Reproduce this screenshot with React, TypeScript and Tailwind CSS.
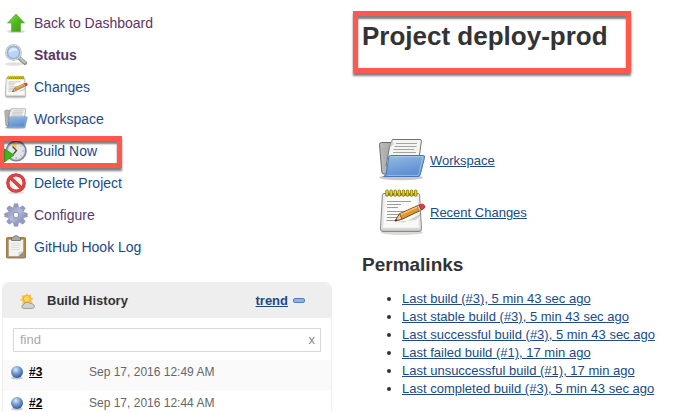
import type { ReactNode } from "react";

function UpIcon() {
  return (
    <svg viewBox="0 0 24 24" className="size-6 shrink-0" aria-hidden="true">
      <defs>
        <linearGradient id="up" x1="0" y1="0" x2="1" y2="1">
          <stop offset="0" stopColor="#8be05a" />
          <stop offset="0.5" stopColor="#4fb81c" />
          <stop offset="1" stopColor="#3a9a10" />
        </linearGradient>
      </defs>
      <ellipse cx="12" cy="20.5" rx="9" ry="1.8" fill="#000" opacity="0.15" />
      <path d="M12 3 L20.5 12 H16.5 V20.5 H7.5 V12 H3.5 Z" fill="url(#up)" stroke="#5fb33a" strokeWidth="0.8" strokeLinejoin="round" />
    </svg>
  );
}

function SearchIcon() {
  return (
    <svg viewBox="0 0 24 24" className="size-6 shrink-0" aria-hidden="true">
      <ellipse cx="10" cy="21" rx="9" ry="1.8" fill="#000" opacity="0.12" />
      <path d="M14.5 14.5 L21 20" stroke="#8f9291" strokeWidth="4.2" strokeLinecap="round" />
      <path d="M16 15.3 L20.8 19.4" stroke="#c3c5c4" strokeWidth="2" strokeLinecap="round" />
      <circle cx="9.5" cy="9.5" r="7.3" fill="#b7d3f5" stroke="#a9acab" strokeWidth="2" />
      <circle cx="9.5" cy="9.5" r="7.3" fill="none" stroke="#dcdedd" strokeWidth="1" />
      <circle cx="9.5" cy="9.5" r="5.9" fill="none" stroke="#7ea9e2" strokeWidth="0.9" />
      <path d="M4.8 9.7 Q5 5 10 4.7 Q13 5 14 7.5 Q9 8 4.8 9.7 Z" fill="#dbe9fb" />
    </svg>
  );
}

function NotepadIcon({ size }: { size: string }) {
  return (
    <svg viewBox="0 0 48 48" className={size} aria-hidden="true">
      <defs>
        <linearGradient id="pad" x1="0" y1="0" x2="0" y2="1">
          <stop offset="0" stopColor="#f0f0ee" />
          <stop offset="0.9" stopColor="#e6e6e4" />
          <stop offset="1" stopColor="#b9bab6" />
        </linearGradient>
      </defs>
      <ellipse cx="24" cy="44.5" rx="21" ry="2.5" fill="#000" opacity="0.15" />
      <path d="M6 5.5 H40 Q41.5 5.5 41.6 7 L43.5 41 Q43.5 43.5 41 43.5 H5 Q2.5 43.5 2.5 41 L4.4 7 Q4.5 5.5 6 5.5 Z" fill="url(#pad)" stroke="#888a85" />
      <path d="M7.5 8 H38.8 L40.5 39.5 H5.5 Z" fill="#fff" opacity="0.75" />
      <g stroke="#9b9c99" strokeWidth="1">
        <path d="M9 13.5 H33 M9 16.5 H23 M9 19.5 H20 M9 23.5 H34 M9 26.5 H26 M9 29.5 H22 M8.5 32.5 H17" />
      </g>
      <path d="M7.5 6.5 H39" stroke="#716a32" strokeWidth="2" />
      <g stroke="#8d7e13" strokeWidth="3.4" strokeLinecap="round">
        <path d="M9 3.3V7M13.1 3.3V7M17.2 3.3V7M21.3 3.3V7M25.4 3.3V7M29.5 3.3V7M33.6 3.3V7M37.7 3.3V7" />
      </g>
      <g stroke="#e9d331" strokeWidth="1.7" strokeLinecap="round">
        <path d="M9 3.2V6.8M13.1 3.2V6.8M17.2 3.2V6.8M21.3 3.2V6.8M25.4 3.2V6.8M29.5 3.2V6.8M33.6 3.2V6.8M37.7 3.2V6.8" />
      </g>
      <path d="M17 34 L38 32 L44 25 L26 34.5 Z" fill="#000" opacity="0.16" />
      <path d="M21.5 25.8 L40.6 17.2 L43 22.2 L24 31.2 L17 33 Z" fill="#dc9634" stroke="#7d4c0d" strokeLinejoin="round" />
      <path d="M22.5 26.6 L40 18.7" stroke="#f6c374" strokeWidth="1.5" />
      <path d="M21.5 25.8 L24 31.2 L17 33 Z" fill="#e8cfa4" stroke="#7d4c0d" strokeWidth="0.8" />
      <path d="M18.5 31 L19.5 32.3 L16.8 33.2 Z" fill="#222" />
      <path d="M38.8 18 L41.2 23 L43.5 22 L41 17 Z" fill="#c6c8c5" stroke="#777" strokeWidth="0.6" />
      <path d="M41 17 Q45.5 15 46.6 17.8 Q47.6 20.4 43.3 22 Z" fill="#ef3a35" stroke="#b51f1c" strokeWidth="0.8" />
    </svg>
  );
}

function FolderIcon({ size }: { size: string }) {
  return (
    <svg viewBox="0 0 48 48" className={size} aria-hidden="true">
      <defs>
        <linearGradient id="folder" x1="0" y1="0" x2="0.4" y2="1">
          <stop offset="0" stopColor="#98bce6" />
          <stop offset="1" stopColor="#5b8fd0" />
        </linearGradient>
        <linearGradient id="back" x1="0" y1="0" x2="1" y2="0">
          <stop offset="0" stopColor="#bdbdbb" />
          <stop offset="1" stopColor="#7c7d7a" />
        </linearGradient>
      </defs>
      <ellipse cx="23" cy="41.5" rx="22" ry="2.8" fill="#000" opacity="0.22" />
      <path d="M1.5 8.5 Q1.5 6.5 3.5 6.5 H14 L16 9 H38 V38 H6 Q4 38 3.8 36 Z" fill="url(#back)" stroke="#6d6e6b" />
      <path d="M4 13 H12 M4.4 16 H11 M4.6 19 H11 M5 22 H10" stroke="#a4a4a1" strokeWidth="0.8" />
      <path d="M14.5 3.5 H42 Q43.6 3.5 43.4 5 L40 30 H8 L11.5 11 Z" fill="#f4f4f3" stroke="#73746f" />
      <path d="M14.5 3.5 L15.5 8.5 L11.3 12.5 Z" fill="#d5d5d2" />
      <path d="M18 7.5 H39 M16.5 10.5 H38.5 M15.5 13.5 H36 M15 16.5 H38" stroke="#a4a5a2" strokeWidth="1.1" />
      <path d="M12.5 19.5 H45 Q47 19.5 46.6 21.3 L42.2 38.8 Q41.7 40.5 40 40.5 H5.5 Q7.7 39.5 8.2 37.5 L10.8 21 Q11 19.5 12.5 19.5 Z" fill="url(#folder)" stroke="#4678b8" />
      <path d="M12.3 20.7 H45 L40.8 38 Q40.4 39.4 39 39.4 H9.4" fill="none" stroke="#c5daf3" strokeWidth="0.8" opacity="0.7" />
    </svg>
  );
}

function BuildIcon() {
  return (
    <svg viewBox="0 0 24 24" className="size-6 shrink-0" aria-hidden="true">
      <circle cx="12.2" cy="12" r="9.7" fill="#e4e4e6" stroke="#80849c" strokeWidth="1.8" />
      <circle cx="12.2" cy="12" r="8.3" fill="none" stroke="#c2c6d8" strokeWidth="0.8" />
      <path d="M12.2 12 L7.5 6 L12.5 4.5 Z" fill="#f2d24a" />
      <path d="M8.5 7.5 L12.5 11.5 L9.5 15" fill="none" stroke="#4a4b4e" strokeWidth="1.3" />
      <path d="M18.4 12h1.2M12.2 18.2v1.3M16.6 7.5l.8-.8M16.6 16.4l.8.8" stroke="#8a8d99" strokeWidth="1" />
      <path d="M0.5 10 L10 16 L0.5 23 Z" fill="#43b516" stroke="#2f8a0e" strokeWidth="0.8" />
    </svg>
  );
}

function DeleteIcon() {
  return (
    <svg viewBox="0 0 24 24" className="size-6 shrink-0" aria-hidden="true">
      <ellipse cx="12" cy="21.7" rx="8" ry="1.5" fill="#000" opacity="0.13" />
      <circle cx="12" cy="12" r="8.2" fill="#f6f3f3" stroke="#cc2f2f" strokeWidth="3.3" />
      <path d="M6.5 6.7 L17.5 17.3" stroke="#cc2f2f" strokeWidth="3.3" />
      <circle cx="12" cy="12" r="8.2" fill="none" stroke="#e04444" strokeWidth="2" />
      <path d="M6.5 6.7 L17.5 17.3" stroke="#e04444" strokeWidth="2" />
    </svg>
  );
}

function GearIcon() {
  const teeth = [0, 45, 90, 135, 180, 225, 270, 315];
  return (
    <svg viewBox="0 0 24 24" className="size-6 shrink-0" aria-hidden="true">
      <defs>
        <linearGradient id="gear" x1="0" y1="0" x2="1" y2="1">
          <stop offset="0" stopColor="#8b93b8" />
          <stop offset="0.5" stopColor="#b3badb" />
          <stop offset="1" stopColor="#7e88b0" />
        </linearGradient>
      </defs>
      <g fill="#939bc0" stroke="#767fa5" strokeWidth="0.4">
        {teeth.map((angle) => (
          <path key={angle} d="M9 6 L10.2 0.7 H13.8 L15 6 Z" transform={`rotate(${angle} 12 12)`} />
        ))}
      </g>
      <circle cx="12" cy="12" r="8" fill="url(#gear)" />
      <circle cx="12" cy="12" r="2.8" fill="#fff" stroke="#7d86ab" strokeWidth="0.9" />
    </svg>
  );
}

function ClipboardIcon() {
  return (
    <svg viewBox="0 0 24 24" className="size-6 shrink-0" aria-hidden="true">
      <rect x="2.5" y="2.5" width="19" height="20.5" rx="1" fill="#b98337" stroke="#99692a" strokeWidth="0.8" />
      <path d="M4.5 4.5 H19.5 V21.5 H4.5 Z" fill="#f2f2f1" stroke="#9a9a97" strokeWidth="0.6" />
      <path d="M7 8.5h10M7 10.5h10M7 12.5h8M7 14.5h9" stroke="#dcdcda" strokeWidth="0.8" />
      <path d="M19.7 16 V21.7 H14 Z" fill="#8d8e8b" />
      <path d="M14 21.5 L15 17 L19.5 16.2 Z" fill="#d3d4d1" />
      <path d="M7.5 5.5 V3.5 Q7.5 2.5 9 2.5 Q9.5 0.7 12 0.7 Q14.5 0.7 15 2.5 Q16.5 2.5 16.5 3.5 V5.5 Z" fill="#a9aaa7" stroke="#6e6f6c" strokeWidth="0.8" />
    </svg>
  );
}

function WeatherIcon() {
  return (
    <svg viewBox="0 0 16 16" className="size-4 shrink-0" aria-hidden="true">
      <path d="M8 0 L9.2 2.6 L12.2 1.2 L11.8 4.3 L15 5.5 L12.4 7.2 L13.5 10 L3 11 L3.8 8.3 L0.5 7 L3.4 5.2 L2.4 2 L5.6 2.8 Z" fill="#f6c65c" />
      <circle cx="7.8" cy="6" r="3.6" fill="#fbd84c" stroke="#eda52f" strokeWidth="0.9" />
      <path d="M4.8 15.4 Q2.8 15.4 2.8 13.4 Q2.8 11.6 5 11.4 Q5.6 9 8.2 9.2 Q10.3 9.2 10.9 10.7 Q13 9.8 14 11.4 Q15.6 11.8 15.4 13.6 Q15.2 15.4 13.2 15.4 Z" fill="#d2d3d1" stroke="#949592" strokeWidth="0.9" />
    </svg>
  );
}

function BallIcon() {
  return (
    <svg viewBox="0 0 16 16" className="size-4 shrink-0" aria-hidden="true">
      <defs>
        <radialGradient id="ball" cx="0.4" cy="0.3" r="0.7">
          <stop offset="0" stopColor="#dbe9fa" />
          <stop offset="0.45" stopColor="#7ba3d6" />
          <stop offset="1" stopColor="#2f5c9c" />
        </radialGradient>
      </defs>
      <ellipse cx="8" cy="14" rx="6" ry="1.4" fill="#000" opacity="0.2" />
      <circle cx="8" cy="8" r="6" fill="url(#ball)" />
    </svg>
  );
}

/* Red annotation frame with a hard drop shadow, laid over what it points at. */
function Highlight({ className }: { className: string }) {
  return (
    <div
      aria-hidden="true"
      className={`pointer-events-none absolute border-5 border-[#ff584c] shadow-[0_3px_2px_rgba(0,0,0,0.5),inset_0_3px_2px_rgba(0,0,0,0.5)] ${className}`}
    />
  );
}

type Task = { label: string; icon: ReactNode; style: string; marked?: boolean };

const tasks: Task[] = [
  { label: "Back to Dashboard", icon: <UpIcon />, style: "text-[#5c3566]" },
  { label: "Status", icon: <SearchIcon />, style: "font-bold text-[#5c3566]" },
  { label: "Changes", icon: <NotepadIcon size="size-6 shrink-0" />, style: "text-[#204a87]" },
  { label: "Workspace", icon: <FolderIcon size="size-6 shrink-0" />, style: "text-[#204a87]" },
  { label: "Build Now", icon: <BuildIcon />, style: "text-[#204a87]", marked: true },
  { label: "Delete Project", icon: <DeleteIcon />, style: "text-[#204a87]" },
  { label: "Configure", icon: <GearIcon />, style: "text-[#5c3566]" },
  { label: "GitHub Hook Log", icon: <ClipboardIcon />, style: "text-[#204a87]" },
];

const builds = [
  { id: "#3", date: "Sep 17, 2016 12:49 AM", style: "bg-[#fafafa]" },
  { id: "#2", date: "Sep 17, 2016 12:44 AM", style: "bg-white" },
];

const permalinks = [
  "Last build (#3), 5 min 43 sec ago",
  "Last stable build (#3), 5 min 43 sec ago",
  "Last successful build (#3), 5 min 43 sec ago",
  "Last failed build (#1), 17 min ago",
  "Last unsuccessful build (#1), 17 min ago",
  "Last completed build (#3), 5 min 43 sec ago",
];

function BuildHistory() {
  return (
    <section className="ml-0.5 rounded-t-md border border-[#eeeeee] text-xs">
      <header className="flex h-[35px] items-center rounded-t-md bg-[#eeeeee] pr-[26px] pl-4 text-[13px]">
        <WeatherIcon />
        <h2 className="ml-3 font-bold text-[#333333]">Build History</h2>
        <a href="#trend" className="ml-auto font-bold text-[#204a87] underline">
          trend
        </a>
        <button type="button" aria-label="Collapse" className="ml-[5px] h-[5px] w-3 rounded-xs border border-[#5581b8] bg-[#8fb3e0]" />
      </header>
      <div className="mx-2.5 mt-2.5 mb-2 flex h-6 items-center border border-[#d8d8d8] text-[13px]">
        <input
          type="text"
          aria-label="Find builds"
          placeholder="find"
          className="min-w-0 flex-1 px-1.5 text-[#333333] outline-none placeholder:text-[#a9a9a9]"
        />
        <button type="button" aria-label="Clear" className="px-[5px] text-[#888888]">
          x
        </button>
      </div>
      <table className="w-full">
        <tbody>
          {builds.map((build) => (
            <tr key={build.id} className={build.style}>
              <td className="h-[31px] w-[86px] p-0 pb-2 pl-1.5">
                <div className="flex items-center gap-1">
                  <BallIcon />
                  <a href={build.id} className="font-bold text-black underline">
                    {build.id}
                  </a>
                </div>
              </td>
              <td className="p-0 pb-2 text-[#666666]">{build.date}</td>
            </tr>
          ))}
        </tbody>
      </table>
    </section>
  );
}

export default function App() {
  return (
    <div className="flex h-screen overflow-hidden bg-white font-['Liberation_Sans',Arial,sans-serif] text-[#333333]">
      <aside className="w-[332px] shrink-0 pt-[7px]">
        <nav className="mb-[19px] text-sm">
          <ul>
            {tasks.map((task) => (
              <li key={task.label} className="relative h-8 pl-1">
                <a href="#task" className={`inline-flex h-full items-center gap-1.5 ${task.style}`}>
                  {task.icon}
                  {task.label}
                </a>
                {task.marked && <Highlight className="top-px -left-px h-8 w-[123px]" />}
              </li>
            ))}
          </ul>
        </nav>
        <BuildHistory />
      </aside>

      <main className="min-w-0 flex-1 pt-5 pl-[30px] text-[13px]">
        <h1 className="relative h-[116px] text-[26px] leading-8 font-bold">
          Project deploy-prod
          <Highlight className="-top-[9px] -left-[9px] h-[62px] w-[278px]" />
        </h1>
        <ul className="flex flex-col gap-1 pl-4 leading-[18px] text-[#204a87]">
          <li>
            <a href="#workspace" className="inline-flex items-center gap-1 align-top underline">
              <FolderIcon size="size-12 shrink-0" />
              <span className="pt-0.5">Workspace</span>
            </a>
          </li>
          <li>
            <a href="#changes" className="inline-flex items-center gap-1 align-top underline">
              <NotepadIcon size="size-12 shrink-0" />
              <span className="pt-0.5">Recent Changes</span>
            </a>
          </li>
        </ul>
        <h2 className="mt-[17px] text-[19px] leading-6 font-bold">Permalinks</h2>
        <ul className="mt-[13px] list-disc pl-10 leading-[18px]">
          {permalinks.map((text) => (
            <li key={text}>
              <a href="#build" className="text-[#204a87] underline">
                {text}
              </a>
            </li>
          ))}
        </ul>
      </main>
    </div>
  );
}
